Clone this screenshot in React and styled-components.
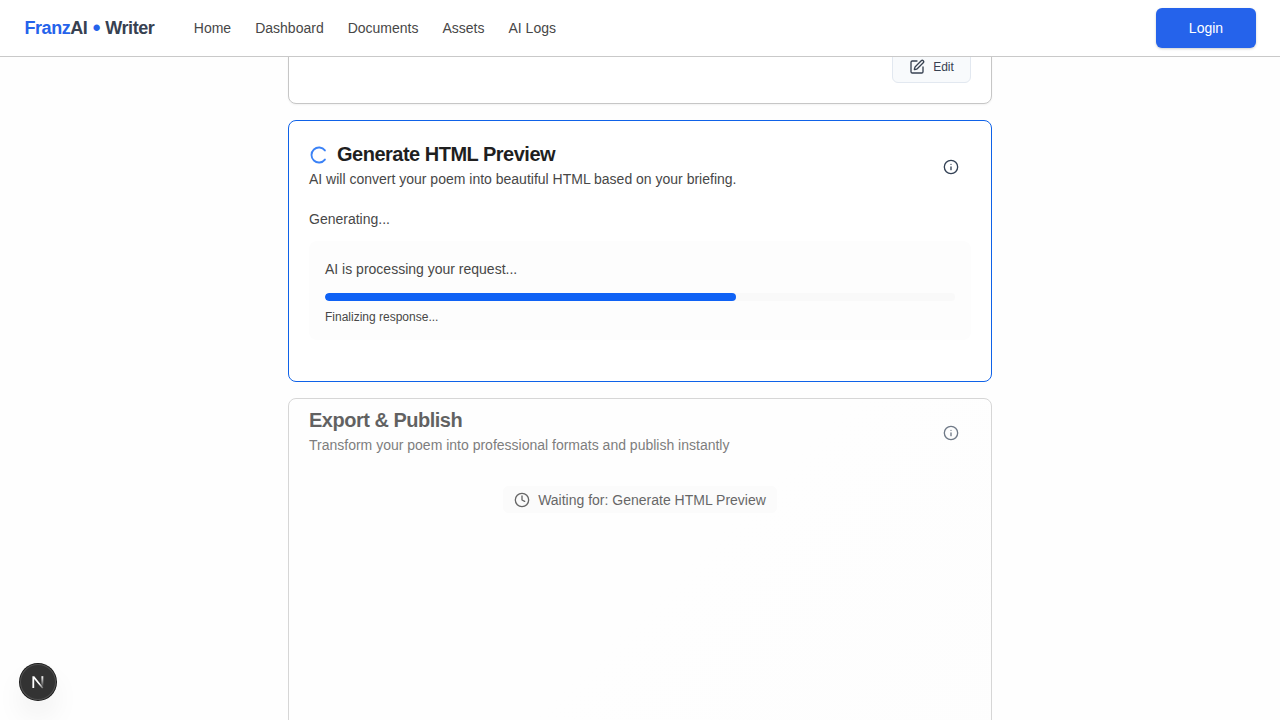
import React from "react";
import styled, { createGlobalStyle } from "styled-components";
import { SquarePen, Info, Clock } from "lucide-react";

const GlobalStyle = createGlobalStyle`
  *, *::before, *::after { box-sizing: border-box; }
  body {
    margin: 0;
    background: #fefefe;
    color: #474747;
    font-family: "Liberation Sans", Arial, Helvetica, sans-serif;
    font-size: 14px;
    line-height: 20px;
  }
`;

const Page = styled.div`
  display: flex;
  flex-direction: column;
  height: 100vh;
  overflow: hidden;
`;

const Header = styled.header`
  display: flex;
  align-items: center;
  flex: none;
  height: 57px;
  padding: 0 24px;
  background: #ffffff;
  border-bottom: 1px solid #c9c9c9;
`;

const Logo = styled.div`
  margin-right: 39.5px;
  padding-left: 0.5px;
  color: #374151;
  font-size: 18px;
  font-weight: 700;
  line-height: 28px;
  letter-spacing: -0.45px;
  white-space: nowrap;
`;

const LogoAccent = styled.span`
  color: #2563eb;
`;

const LogoDot = styled(LogoAccent)`
  margin: 0 0.8px;
  font-size: 22px;
  line-height: 0;
  vertical-align: -0.5px;
`;

const Nav = styled.nav`
  display: flex;
  gap: 24px;
`;

const NavLink = styled.a`
  color: #474747;
  white-space: nowrap;
`;

const LoginButton = styled.button`
  width: 100px;
  height: 40px;
  margin-left: auto;
  border: 0;
  border-radius: 6px;
  background: #2563eb;
  color: #ffffff;
  font: inherit;
  box-shadow: 0 1px 3px rgba(0, 0, 0, 0.12), 0 1px 2px rgba(0, 0, 0, 0.08);
`;

const Content = styled.main`
  flex: 1;
  min-height: 0;
  overflow: hidden;
`;

const Stages = styled.div`
  display: flex;
  flex-direction: column;
  gap: 16px;
  width: 704px;
  margin: -27px auto 0;
`;

const Card = styled.section`
  flex: none;
  height: ${(p) => p.$height}px;
  padding: ${(p) => p.$top ?? 19}px 20px 20px;
  border: 1px solid ${(p) => (p.$active ? "#0f62e8" : "#c6c6c6")};
  border-radius: 8px;
  background: ${(p) => (p.$locked ? "linear-gradient(135deg, #ffffff, #fdfdfd)" : "#ffffff")};
  opacity: ${(p) => (p.$locked ? 0.7 : 1)};
  box-shadow: ${(p) => (p.$active || p.$locked ? "none" : "0 1px 2px rgba(0, 0, 0, 0.05)")};
`;

const Actions = styled.div`
  display: flex;
  justify-content: flex-end;
  align-items: flex-end;
  height: 100%;
`;

const EditButton = styled.button`
  display: flex;
  align-items: center;
  justify-content: center;
  gap: 8px;
  width: 79px;
  height: 32px;
  padding: 0;
  border: 1px solid #e2e8f0;
  border-radius: 6px;
  background: #f8fafc;
  color: #374151;
  font: inherit;
  font-size: 12px;
`;

const CardHeader = styled.div`
  display: flex;
  justify-content: space-between;
  align-items: flex-start;
`;

const TitleRow = styled.div`
  display: flex;
  align-items: center;
  gap: 8px;
  height: 28px;
`;

const Title = styled.h2`
  margin: 0;
  color: #1f1f1f;
  font-size: 20px;
  font-weight: 700;
  line-height: 28px;
  letter-spacing: -0.5px;
`;

const InfoButton = styled.button`
  display: flex;
  align-items: center;
  justify-content: center;
  width: 32px;
  height: 32px;
  margin: 11px 4px 0 0;
  padding: 0;
  border: 0;
  background: transparent;
  color: #334155;
`;

const Description = styled.p`
  margin: 1px 0 0;
`;

const Status = styled.p`
  margin: 20px 0 12px;
`;

const ProgressPanel = styled.div`
  height: 99px;
  padding: 18px 16px 0;
  border-radius: 8px;
  background: #fdfdfd;
`;

const ProgressTrack = styled.div`
  height: 8px;
  margin: 14px 0 6px;
  overflow: hidden;
  border-radius: 4px;
  background: #f9f9f9;
`;

const ProgressFill = styled.div`
  height: 100%;
  border-radius: 4px;
  background: #0f62f5;
`;

const ProgressNote = styled.div`
  font-size: 12px;
`;

const WaitingRow = styled.div`
  display: flex;
  justify-content: center;
  margin-top: 31px;
`;

const WaitingBadge = styled.div`
  display: flex;
  align-items: center;
  gap: 8.5px;
  height: 27px;
  padding: 0 11.5px 0 11px;
  border-radius: 6px;
  background: #fafafa;
  color: #262626;
`;

const DevBadge = styled.div`
  position: fixed;
  left: 20px;
  bottom: 20px;
  display: flex;
  align-items: center;
  justify-content: center;
  width: 36px;
  height: 36px;
  border-radius: 50%;
  background: #333333;
  box-shadow: 0 0 0 1px #171717, inset 0 0 0 1px #505050,
    0 16px 32px -8px rgba(0, 0, 0, 0.2);
`;

const Spinner = () => (
  <svg width="20" height="20" viewBox="0 0 24 24" fill="none" stroke="#3b82f6" strokeWidth="2.2" strokeLinecap="round">
    <path d="M19.1 7.7A9 9 0 1 0 19.1 18.7" />
  </svg>
);

const NextMark = () => (
  <svg width="14" height="14" viewBox="0 0 14 14" fill="none">
    <defs>
      <linearGradient id="stem" x1="0" y1="1" x2="0" y2="11" gradientUnits="userSpaceOnUse">
        <stop stopColor="#fff" />
        <stop offset="1" stopColor="#fff" stopOpacity="0.1" />
      </linearGradient>
      <linearGradient id="slash" x1="6" y1="6" x2="12" y2="14" gradientUnits="userSpaceOnUse">
        <stop offset="0.35" stopColor="#fff" />
        <stop offset="1" stopColor="#fff" stopOpacity="0.2" />
      </linearGradient>
    </defs>
    <path d="M1.4 13V1.2H3.3L12.4 12.7L11.1 13.6L3.2 3.9V13Z" fill="url(#slash)" />
    <rect x="10.4" y="1.2" width="1.9" height="10" fill="url(#stem)" />
  </svg>
);

const links = ["Home", "Dashboard", "Documents", "Assets", "AI Logs"];

function StageHeader({ icon, title, description }) {
  return (
    <CardHeader>
      <div>
        <TitleRow>
          {icon}
          <Title>{title}</Title>
        </TitleRow>
        <Description>{description}</Description>
      </div>
      <InfoButton aria-label="Stage information">
        <Info size={16} />
      </InfoButton>
    </CardHeader>
  );
}

export default function App() {
  const progress = 65.2;
  return (
    <Page>
      <GlobalStyle />
      <Header>
        <Logo>
          <LogoAccent>Franz</LogoAccent>AI <LogoDot>•</LogoDot> Writer
        </Logo>
        <Nav>
          {links.map((link) => (
            <NavLink key={link}>{link}</NavLink>
          ))}
        </Nav>
        <LoginButton>Login</LoginButton>
      </Header>
      <Content>
        <Stages>
          <Card $height={74}>
            <Actions>
              <EditButton>
                <SquarePen size={16} />
                Edit
              </EditButton>
            </Actions>
          </Card>
          <Card $height={262} $active>
            <StageHeader
              icon={<Spinner />}
              title="Generate HTML Preview"
              description="AI will convert your poem into beautiful HTML based on your briefing."
            />
            <Status>Generating...</Status>
            <ProgressPanel>
              <div>AI is processing your request...</div>
              <ProgressTrack>
                <ProgressFill style={{ width: `${progress}%` }} />
              </ProgressTrack>
              <ProgressNote>Finalizing response...</ProgressNote>
            </ProgressPanel>
          </Card>
          <Card $height={420} $top={7} $locked>
            <StageHeader
              title="Export & Publish"
              description="Transform your poem into professional formats and publish instantly"
            />
            <WaitingRow>
              <WaitingBadge>
                <Clock size={16} />
                Waiting for: Generate HTML Preview
              </WaitingBadge>
            </WaitingRow>
          </Card>
        </Stages>
      </Content>
      <DevBadge>
        <NextMark />
      </DevBadge>
    </Page>
  );
}
